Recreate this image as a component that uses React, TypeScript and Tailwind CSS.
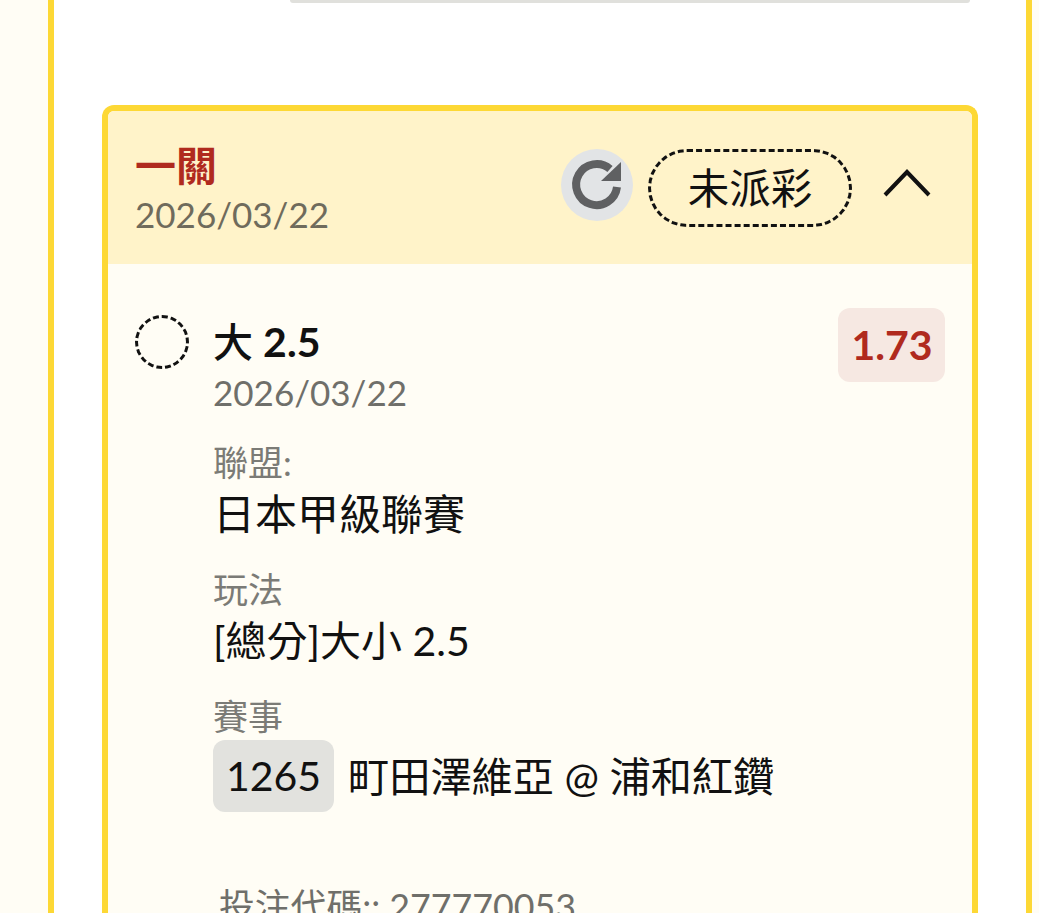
import React from "react";

export default function App() {
  return (
    <div className="h-[913px] w-[1039px] overflow-hidden bg-[#fffdf5] pl-[48px] pr-[7px] font-['Lato','Noto_Sans_CJK_TC',sans-serif]">
      <div className="h-full border-x-[6px] border-[#fdd835] bg-white px-[48px]">
        <div className="ml-[188px] mr-[8px] h-[3px] rounded-b-[10px] bg-[#e0e0dc]" />
        <div className="mt-[102px] h-[900px] overflow-hidden rounded-t-[12px] border-x-[6px] border-t-[6px] border-[#fdd835] bg-[#fffdf5]">
          <div className="flex h-[153px] items-start justify-between bg-[#fff3c9] pl-[27px] pr-[41px]">
            <div className="pt-[32px]">
              <div className="text-[41px] leading-[46px] font-bold text-[#b02a1e]">一關</div>
              <div className="mt-[6px] text-[35px] leading-[38px] text-[#6f6b5c]">2026/03/22</div>
            </div>
            <div className="flex items-start pt-[38px]">
              <div className="mr-[15px] flex h-[72px] w-[72px] items-center justify-center rounded-full bg-[#e2e4e6]">
                <svg viewBox="0 0 72 72" className="h-[72px] w-[72px]" fill="none">
                  <path d="M56 38A20.5 20.5 0 1 1 49 20" stroke="#5f6062" strokeWidth="8" />
                  <path d="M60 13v19H40z" fill="#5f6062" />
                </svg>
              </div>
              <div className="flex h-[78px] w-[204px] items-center justify-center rounded-full border-[3px] border-dashed border-[#111] text-[41.5px] text-[#111]">
                未派彩
              </div>
              <svg viewBox="0 0 48 28" className="ml-[31px] mt-[20px] h-[28px] w-[48px]" fill="none">
                <path d="M2 26 24 3l22 23" stroke="#111" strokeWidth="4" />
              </svg>
            </div>
          </div>
          <div className="px-[27px] pt-[44px]">
            <div className="flex items-start">
              <div className="mt-[7px] h-[54px] w-[54px] shrink-0 rounded-full border-[3px] border-dashed border-[#111]" />
              <div className="ml-[24px] flex-1">
                <div className="flex items-start justify-between">
                  <div>
                    <div className="mt-[11px] text-[40px] leading-[46px] font-medium text-[#111]">
                      大 <span className="text-[41px] font-bold">2.5</span>
                    </div>
                    <div className="mt-[4px] text-[35px] leading-[46px] text-[#6f6f6a]">2026/03/22</div>
                  </div>
                  <div className="flex h-[74px] w-[107px] items-center justify-center rounded-[12px] bg-[#f6e8e2] pl-[1px] text-[41px] font-bold text-[#b02a1e]">1.73</div>
                </div>
                <div className="mt-[24px] text-[35px] leading-[46px] text-[#7b7b76]">聯盟:</div>
                <div className="mt-[1px] text-[42px] leading-[56px] text-[#111]">日本甲級聯賽</div>
                <div className="mt-[24px] text-[35px] leading-[46px] text-[#7b7b76]">玩法</div>
                <div className="mt-[1px] text-[41px] leading-[56px] text-[#111]">[總分]大小 2.5</div>
                <div className="mt-[24px] text-[35px] leading-[46px] text-[#7b7b76]">賽事</div>
                <div className="mt-[1px] flex items-center text-[41.2px] text-[#111]">
                  <span className="flex h-[72px] w-[121px] items-center justify-center rounded-[12px] bg-[#e2e2de] text-[41px]">1265</span>
                  <span className="ml-[14px] pt-[2px]">町田澤維亞 @ 浦和紅鑽</span>
                </div>
                <div className="ml-[6px] mt-[72px] text-[35.8px] leading-[46px] text-[#6f6f6a]">投注代碼:: 277770053</div>
              </div>
            </div>
          </div>
        </div>
      </div>
    </div>
  );
}
